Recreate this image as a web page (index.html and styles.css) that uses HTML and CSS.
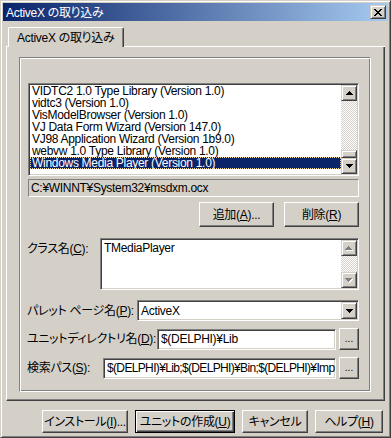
FILE: index.html
```html
<!DOCTYPE html>
<html lang="ja">
<head>
<meta charset="utf-8">
<title>ActiveX の取り込み</title>
<link rel="stylesheet" href="styles.css">
</head>
<body>
<div class="window">
  <div class="titlebar">
    <span class="title">ActiveX の取り込み</span>
    <span class="close raised">
      <svg width="8" height="7" viewBox="0 0 8 7" shape-rendering="crispEdges"><path d="M0 0h2v1H0zM6 0h2v1H6zM1 1h2v1H1zM5 1h2v1H5zM2 2h4v1H2zM3 3h2v1H3zM2 4h4v1H2zM1 5h2v1H1zM5 5h2v1H5zM0 6h2v1H0zM6 6h2v1H6z" fill="#000"/></svg>
    </span>
  </div>
  <div class="body">
    <div class="tabs">
      <div class="tab-lead"></div>
      <div class="tab">ActiveX の取り込み</div>
      <div class="tab-fill"></div>
    </div>
    <div class="sheet">
      <div class="group">
        <div class="listbox sunken">
          <div class="items">
            <div class="item">VIDTC2 1.0 Type Library (Version 1.0)</div>
            <div class="item">vidtc3 (Version 1.0)</div>
            <div class="item">VisModelBrowser (Version 1.0)</div>
            <div class="item">VJ Data Form Wizard (Version 147.0)</div>
            <div class="item">VJ98 Application Wizard (Version 1b9.0)</div>
            <div class="item">webvw 1.0 Type Library (Version 1.0)</div>
            <div class="item selected">Windows Media Player (Version 1.0)</div>
          </div>
          <div class="vscroll">
            <div class="sbtn raised"><svg width="7" height="4" viewBox="0 0 7 4" shape-rendering="crispEdges"><path d="M3 0h1v1h1v1h1v1h1v1H0V3h1V2h1V1h1z" fill="#000"/></svg></div>
            <div class="track"></div>
            <div class="thumb raised"></div>
            <div class="sbtn raised"><svg width="7" height="4" viewBox="0 0 7 4" shape-rendering="crispEdges"><path d="M0 0h7v1H6v1H5v1H4v1H3V3H2V2H1V1H0z" fill="#000"/></svg></div>
          </div>
        </div>
        <div class="path">C:¥WINNT¥System32¥msdxm.ocx</div>
        <div class="btnrow">
          <div class="btn w75">追加(<u>A</u>)...</div>
          <div class="btn w75">削除(<u>R</u>)</div>
        </div>
        <div class="row row-memo">
          <div class="label lw72 top">クラス名(<u>C</u>):</div>
          <div class="memo sunken">
            <div class="memo-text">TMediaPlayer</div>
            <div class="vscroll">
              <div class="sbtn raised"><svg width="8" height="5" viewBox="0 0 8 5" shape-rendering="crispEdges"><path d="M4 1h1v1h1v1h1v1h1v1H1V4h1V3h1V2h1z" fill="#fff"/><path d="M3 0h1v1h1v1h1v1h1v1H0V3h1V2h1V1h1z" fill="#808080"/></svg></div>
              <div class="track"></div>
              <div class="sbtn raised"><svg width="8" height="5" viewBox="0 0 8 5" shape-rendering="crispEdges"><path d="M1 1h7v1H7v1H6v1H5v1H4V4H3V3H2V2H1z" fill="#fff"/><path d="M0 0h7v1H6v1H5v1H4v1H3V3H2V2H1V1H0z" fill="#808080"/></svg></div>
            </div>
          </div>
        </div>
        <div class="row row-combo">
          <div class="label lw109">パレット ページ名(<u>P</u>):</div>
          <div class="combo sunken">
            <div class="combo-text">ActiveX</div>
            <div class="dropbtn raised"><svg width="7" height="4" viewBox="0 0 7 4" shape-rendering="crispEdges"><path d="M0 0h7v1H6v1H5v1H4v1H3V3H2V2H1V1H0z" fill="#000"/></svg></div>
          </div>
        </div>
        <div class="row row-edit">
          <div class="label lw126">ユニットディレクトリ名(<u>D</u>):</div>
          <div class="edit sunken"><span class="edit-text">$(DELPHI)¥Lib</span></div>
          <div class="btn dots">...</div>
        </div>
        <div class="row row-edit">
          <div class="label lw72">検索パス(<u>S</u>):</div>
          <div class="edit sunken"><span class="edit-text tight">$(DELPHI)¥Lib;$(DELPHI)¥Bin;$(DELPHI)¥Imp</span></div>
          <div class="btn dots">...</div>
        </div>
      </div>
    </div>
    <div class="footer">
      <div class="btn fw86">インストール(<u>I</u>)...</div>
      <div class="btn default fw100">ユニットの作成(<u>U</u>)</div>
      <div class="btn fw66">キャンセル</div>
      <div class="btn fw68">ヘルプ(<u>H</u>)</div>
    </div>
  </div>
</div>
</body>
</html>
```

FILE: styles.css
```css
* { box-sizing: border-box; margin: 0; padding: 0; }
html, body { width: 391px; height: 438px; overflow: hidden; }
body {
  background: #d4d0c8;
  font-family: "Liberation Sans", "Noto Sans CJK JP", sans-serif;
  font-size: 12px;
  line-height: 12px;
  color: #000;
  font-feature-settings: "palt";
  letter-spacing: -0.3px;
}
u { text-decoration: underline; text-underline-offset: 1px; }

.window {
  width: 391px; height: 438px;
  border: 1px solid; border-color: #d4d0c8 #404040 #404040 #d4d0c8;
  box-shadow: inset 1px 1px #fff, inset -1px -1px #808080;
  padding: 2px;
  display: flex; flex-direction: column;
}

.raised {
  background: #d4d0c8;
  border: 1px solid; border-color: #d4d0c8 #404040 #404040 #d4d0c8;
  box-shadow: inset 1px 1px #fff, inset -1px -1px #808080;
  display: flex; align-items: center; justify-content: center;
}
.sunken {
  background: #fff;
  border: 1px solid; border-color: #808080 #fff #fff #808080;
  box-shadow: inset 1px 1px #404040, inset -1px -1px #d4d0c8;
  padding: 1px;
}

.titlebar {
  height: 18px; flex: none;
  background: linear-gradient(to right, #0a246a, #a6caf0);
  display: flex; align-items: center; justify-content: space-between;
  padding: 0 2px 0 3px;
  color: #fff;
}
.title { padding-top: 1px; }
.close { width: 16px; height: 14px; }

.body { flex: 1; padding: 0 3px; display: flex; flex-direction: column; }

.tabs { margin-top: 6px; height: 20px; display: flex; flex: none; }
.tab-lead { width: 2px; border-bottom: 1px solid #fff; }
.tab-fill { flex: 1; border-bottom: 1px solid #fff; }
.tab {
  width: 116px; height: 20px;
  border-left: 1px solid #fff; border-top: 1px solid #fff; border-right: 1px solid #404040;
  box-shadow: inset -1px 0 #808080;
  border-radius: 2px 2px 0 0;
  padding: 4px 0 0 8px;
}

.sheet {
  height: 354px; flex: none;
  border-left: 1px solid #fff; border-right: 1px solid #404040; border-bottom: 1px solid #404040;
  box-shadow: inset -1px -1px #808080;
  padding: 10px 0 0 12px;
}

.group {
  width: 352px; height: 335px;
  border: 1px solid; border-color: #808080 #fff #fff #808080;
  box-shadow: inset 1px 1px #fff, inset -1px -1px #808080;
  padding: 25px 11px 0 8px;
  display: flex; flex-direction: column;
}

.listbox { height: 93px; display: flex; flex: none; }
.items { flex: 1; overflow: hidden; white-space: nowrap; }
.item { height: 12px; line-height: 12px; padding: 0 2px; }
.item.selected { background: #0a246a; color: #fff; outline: 1px dotted #f5db95; outline-offset: -1px; }

.vscroll { width: 16px; display: flex; flex-direction: column; flex: none; }
.sbtn { width: 16px; height: 16px; flex: none; }
.track { flex: 1; background: repeating-conic-gradient(#fff 0 25%, #d4d0c8 0 50%) 0 0 / 2px 2px; }
.thumb { height: 8px; flex: none; }

.path {
  height: 18px; margin-top: 3px; flex: none;
  border: 1px solid; border-color: #808080 #fff #fff #808080;
  padding-left: 2px;
  display: flex; align-items: center;
  white-space: nowrap;
}

.btn {
  background: #d4d0c8;
  border: 1px solid; border-color: #fff #404040 #404040 #fff;
  box-shadow: inset -1px -1px #808080;
  display: flex; align-items: center; justify-content: center;
  white-space: nowrap;
  flex: none;
}
.btn.default {
  border: 1px solid #000;
  box-shadow: inset 1px 1px #fff, inset -1px -1px #404040, inset -2px -2px #808080;
}
.w75 { width: 75px; height: 25px; }

.btnrow { margin-top: 5px; display: flex; justify-content: flex-end; gap: 10px; flex: none; }

.row { display: flex; align-items: center; flex: none; }
.label { margin-left: -1px; white-space: nowrap; flex: none; }
.label.top { align-self: flex-start; padding-top: 5px; }
.lw72 { width: 73px; }
.lw109 { width: 110px; }
.lw126 { width: 127px; }

.row-memo { margin-top: 11px; height: 52px; }
.memo { flex: 1; height: 52px; display: flex; }
.memo-text { flex: 1; padding: 2px 2px 0; }

.row-combo { margin-top: 10px; height: 21px; }
.combo { flex: 1; height: 21px; display: flex; }
.combo-text { flex: 1; padding-left: 2px; display: flex; align-items: center; }
.dropbtn { width: 16px; height: 17px; }

.row-edit { margin-top: 7px; height: 22px; gap: 3px; }
.edit { flex: 1; min-width: 0; height: 21px; display: flex; align-items: center; overflow: hidden; white-space: nowrap; }
.edit-text { padding-left: 2px; }
.edit-text.tight { letter-spacing: -0.65px; }
.dots { width: 20px; height: 22px; align-items: flex-end; padding-bottom: 5px; font-size: 10px; line-height: 10px; letter-spacing: 0; }

.footer { margin-top: 9px; display: flex; justify-content: flex-end; gap: 7px; padding-right: 2px; }
.fw86 { width: 86px; height: 23px; }
.fw100 { width: 100px; height: 23px; }
.fw66 { width: 66px; height: 23px; }
.fw68 { width: 68px; height: 23px; }
```
